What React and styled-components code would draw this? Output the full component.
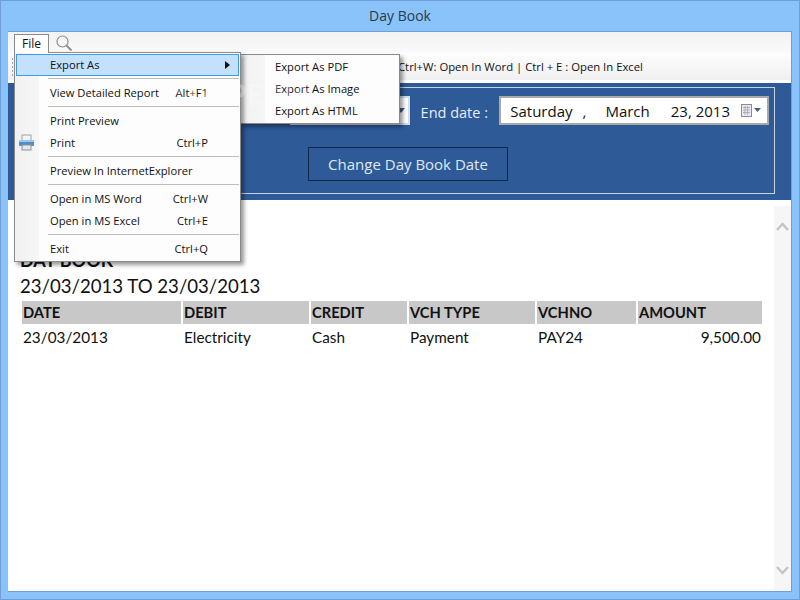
import React from 'react';
import styled, { createGlobalStyle } from 'styled-components';

const GlobalStyle = createGlobalStyle`
  html, body { margin: 0; padding: 0; height: 600px; overflow: hidden; }
  body { font-family: "Open Sans", "Liberation Sans", sans-serif; color: #111; }
`;

const Frame = styled.div`
  position: relative;
  width: 800px;
  height: 600px;
  box-sizing: border-box;
  display: flex;
  flex-direction: column;
  padding: 0 7px 7px;
  background: #8ac3f9;
  border: 1px solid #6f9fd4;
  overflow: hidden;
`;

const TitleBar = styled.div`
  height: 30px;
  box-sizing: border-box;
  padding-bottom: 2px;
  flex: none;
  display: flex;
  align-items: center;
  justify-content: center;
  font-size: 14px;
  color: #2b3a4a;
`;

const Client = styled.div`
  flex: 1;
  display: flex;
  flex-direction: column;
  background: #fff;
  border: solid #6f9fd4;
  border-width: 1px 1px 1px 0;
  min-height: 0;
`;

const MenuBar = styled.div`
  height: 21px;
  flex: none;
  display: flex;
  align-items: flex-end;
  padding-left: 6px;
  background: linear-gradient(#f2f2f2, #fafafa);
`;

const FileTab = styled.div`
  width: 35px;
  height: 19px;
  box-sizing: border-box;
  border: 1px solid #8a8a8a;
  border-bottom: none;
  background: #fff;
  font-size: 12px;
  line-height: 18px;
  text-align: center;
  position: relative;
  z-index: 3;
`;

const SearchIcon = styled.svg`
  width: 18px;
  height: 18px;
  margin: 0 0 1px 6px;
`;

const ToolBar = styled.div`
  height: 27px;
  flex: none;
  display: flex;
  align-items: center;
  background: linear-gradient(#fdfdfd, #f0f0f0);
`;

const Gripper = styled.div`
  width: 3px;
  height: 20px;
  margin-left: 3px;
  background-image: radial-gradient(#a8a8a8 1px, transparent 1px);
  background-size: 3px 4px;
`;

const ToolText = styled.span`
  margin-left: 384px;
  font-size: 11.3px;
  white-space: nowrap;
  color: #111;
`;

const DatePanel = styled.div`
  margin-top: 3px;
  height: 117px;
  flex: none;
  box-sizing: border-box;
  padding: 4px 16px 6px 17px;
  background: #2f5a98;
`;

const PanelInner = styled.div`
  height: 100%;
  box-sizing: border-box;
  border: 1px solid #c9d3e0;
  display: flex;
  flex-direction: column;
  align-items: center;
  padding-top: 8px;
`;

const DateRow = styled.div`
  align-self: flex-end;
  display: flex;
  align-items: center;
  margin-right: 5px;
`;

const DateBox = styled.div`
  height: 29px;
  box-sizing: border-box;
  background: #fff;
  border: 2px solid ${(props) => props.$borderColor || '#a9a9a9'};
  display: flex;
  align-items: center;
  font-size: 15px;
  color: #111;
  width: ${(props) => props.$width}px;
  justify-content: flex-end;
  padding-right: ${(props) => props.$padRight || 0}px;
`;

const DropArrow = styled.span`
  border-top: 5px solid #4a5f85;
  border-left: 4px solid transparent;
  border-right: 4px solid transparent;
`;

const DatePart = styled.span`
  margin-right: ${(props) => props.$gap}px;
  white-space: nowrap;
`;

const DateLabel = styled.span`
  font-size: 14.5px;
  color: #e6edf6;
  margin: 4px 11px 0;
`;

const ChangeButton = styled.button`
  margin: 22px 0 0 16px;
  width: 200px;
  height: 34px;
  background: transparent;
  border: 1px solid #0d2748;
  color: #dfe8f3;
  font-family: inherit;
  font-size: 15px;
  padding: 0;
`;

const ReportArea = styled.div`
  flex: 1;
  display: flex;
  min-height: 0;
  margin-top: 6px;
`;

const Report = styled.div`
  flex: 1;
  padding: 43px 0 0 12px;
  font-family: Lato, "Open Sans", sans-serif;
`;

const ReportTitle = styled.div`
  font-size: 18px;
  font-weight: 700;
  line-height: 23px;
`;

const ReportRange = styled.div`
  font-size: 18.6px;
  line-height: 28px;
  margin-bottom: 1px;
`;

const Grid = styled.div`
  display: grid;
  grid-template-columns: 159px 126px 96px 126px 99px 124px;
  column-gap: 2px;
  margin-left: 2px;
`;

const HeadCell = styled.div`
  height: 23px;
  line-height: 23px;
  padding-left: 1px;
  background: #c8c8c8;
  font-size: 14.7px;
  font-weight: 700;
`;

const Cell = styled.div`
  height: 27px;
  line-height: 27px;
  padding: 0 1px;
  font-size: 15.3px;
  text-align: ${(props) => props.$align || 'left'};
`;

const ScrollBar = styled.div`
  width: 17px;
  flex: none;
  background: #f6f6f6;
  display: flex;
  flex-direction: column;
  justify-content: space-between;
  align-items: center;
  padding: 16px 0 16px;
`;

const Chevron = styled.svg`
  width: 13px;
  height: 9px;
`;

const Menu = styled.div`
  position: absolute;
  box-sizing: border-box;
  left: ${(props) => props.$left}px;
  top: ${(props) => props.$top}px;
  width: ${(props) => props.$width}px;
  padding: 1px;
  background: linear-gradient(to right, #f1f1f1, #f6f6f6 ${(props) => props.$gutter}px, #fdfdfd ${(props) => props.$gutter}px);
  border: 1px solid #8a8a8a;
  box-shadow: 3px 3px 4px rgba(0, 0, 0, 0.4);
  z-index: ${(props) => props.$z || 2};
`;

const MenuItem = styled.div`
  height: 22px;
  box-sizing: border-box;
  display: flex;
  align-items: center;
  justify-content: space-between;
  padding: 0 31px 2px 34px;
  font-size: 11.2px;
  color: #111;
  white-space: nowrap;
  position: relative;
  ${(props) => props.$active && `
    background: #c3e0fd;
    outline: 1px solid #3f9be8;
    outline-offset: -1px;
  `}
`;

const SubItem = styled(MenuItem)`
  padding: 0 0 2px 33px;
`;

const Separator = styled.div`
  height: 1px;
  margin: 2px 0 3px 32px;
  background: #bdbdbd;
`;

const Arrow = styled.span`
  position: absolute;
  right: 9px;
  top: 7px;
  border-left: 5px solid #111;
  border-top: 4px solid transparent;
  border-bottom: 4px solid transparent;
`;

const PrinterIcon = styled.svg`
  position: absolute;
  left: 2px;
  top: 2px;
  width: 17px;
  height: 17px;
`;

const CalendarIcon = styled.svg`
  width: 23px;
  height: 14px;
  margin-left: 11px;
`;

const Watermark = styled.div`
  position: absolute;
  left: 159px;
  top: 79px;
  font-family: "Open Sans", sans-serif;
  font-size: 28px;
  line-height: 28px;
  font-weight: 700;
  color: rgba(255, 255, 255, 0.25);
  z-index: 4;
  pointer-events: none;
`;

const headers = ['DATE', 'DEBIT', 'CREDIT', 'VCH TYPE', 'VCHNO', 'AMOUNT'];

const MenuEntry = ({ label, keys, children }) => (
  <MenuItem>
    {children}
    <span>{label}</span>
    {keys && <span>{keys}</span>}
  </MenuItem>
);

function App() {
  return (
    <Frame>
      <GlobalStyle />
      <TitleBar>Day Book</TitleBar>
      <Client>
        <MenuBar>
          <FileTab>File</FileTab>
          <SearchIcon viewBox="0 0 18 18" fill="none" stroke="#8f8f8f">
            <circle cx="7.5" cy="7.5" r="5.5" strokeWidth="1.2" />
            <path d="M11.5 11.5 L16.5 16.5" strokeWidth="2" />
          </SearchIcon>
        </MenuBar>
        <ToolBar>
          <Gripper />
          <ToolText>Ctrl+W: Open In Word | Ctrl + E : Open In Excel</ToolText>
        </ToolBar>
        <DatePanel>
          <PanelInner>
            <DateRow>
              <DateBox $width={120} $borderColor="#d5dfec" $padRight={3}>
                <DropArrow />
              </DateBox>
              <DateLabel>End date :</DateLabel>
              <DateBox $width={270} $padRight={3}>
                <DatePart $gap={10}>Saturday</DatePart>
                <DatePart $gap={19}>,</DatePart>
                <DatePart $gap={21}>March</DatePart>
                <DatePart $gap={0}>23, 2013</DatePart>
                <CalendarIcon viewBox="0 0 23 14">
                  <rect x="0.5" y="0.5" width="10" height="12" fill="#e8e8ee" stroke="#8a8a98" />
                  <path d="M2 3.5h7M2 6h7M2 8.5h7M4 2v9M6.5 2v9" stroke="#a5a5b2" strokeWidth="0.8" />
                  <path d="M13 4h7l-3.5 4z" fill="#4a5f85" />
                </CalendarIcon>
              </DateBox>
            </DateRow>
            <ChangeButton>Change Day Book Date</ChangeButton>
          </PanelInner>
        </DatePanel>
        <ReportArea>
          <Report>
            <ReportTitle>DAY BOOK</ReportTitle>
            <ReportRange>23/03/2013 TO 23/03/2013</ReportRange>
            <Grid>
              {headers.map((h) => <HeadCell key={h}>{h}</HeadCell>)}
              <Cell>23/03/2013</Cell>
              <Cell>Electricity</Cell>
              <Cell>Cash</Cell>
              <Cell>Payment</Cell>
              <Cell>PAY24</Cell>
              <Cell $align="right">9,500.00</Cell>
            </Grid>
          </Report>
          <ScrollBar>
            <Chevron viewBox="0 0 13 9" fill="none" stroke="#c4c4c4" strokeWidth="2.4">
              <path d="M1 8 L6.5 2 L12 8" />
            </Chevron>
            <Chevron viewBox="0 0 13 9" fill="none" stroke="#c4c4c4" strokeWidth="2.4">
              <path d="M1 1 L6.5 7 L12 1" />
            </Chevron>
          </ScrollBar>
        </ReportArea>
      </Client>

      <Menu $left={13} $top={51} $width={227} $gutter={24}>
        <MenuItem $active>
          <span>Export As</span>
          <Arrow />
        </MenuItem>
        <Separator />
        <MenuEntry label="View Detailed Report" keys="Alt+F1" />
        <Separator />
        <MenuEntry label="Print Preview" />
        <MenuEntry label="Print" keys="Ctrl+P">
          <PrinterIcon viewBox="0 0 17 17">
            <rect x="4" y="1" width="9" height="6" fill="#f4f4f4" stroke="#9aa4b0" />
            <rect x="1" y="6" width="15" height="6" rx="1" fill="#4f8fc9" />
            <rect x="1" y="6" width="15" height="2" fill="#9cc6ea" />
            <rect x="4" y="11" width="9" height="5" fill="#e6e6e6" stroke="#8b939c" />
          </PrinterIcon>
        </MenuEntry>
        <Separator />
        <MenuEntry label="Preview In InternetExplorer" />
        <Separator />
        <MenuEntry label="Open in MS Word" keys="Ctrl+W" />
        <MenuEntry label="Open in MS Excel" keys="Ctrl+E" />
        <Separator />
        <MenuEntry label="Exit" keys="Ctrl+Q" />
      </Menu>

      <Menu $left={239} $top={53} $width={160} $gutter={24} $z={1}>
        <SubItem>Export As PDF</SubItem>
        <SubItem>Export As Image</SubItem>
        <SubItem>Export As HTML</SubItem>
      </Menu>
      <Watermark>SOFTPEDIA</Watermark>
    </Frame>
  );
}

export default App;
